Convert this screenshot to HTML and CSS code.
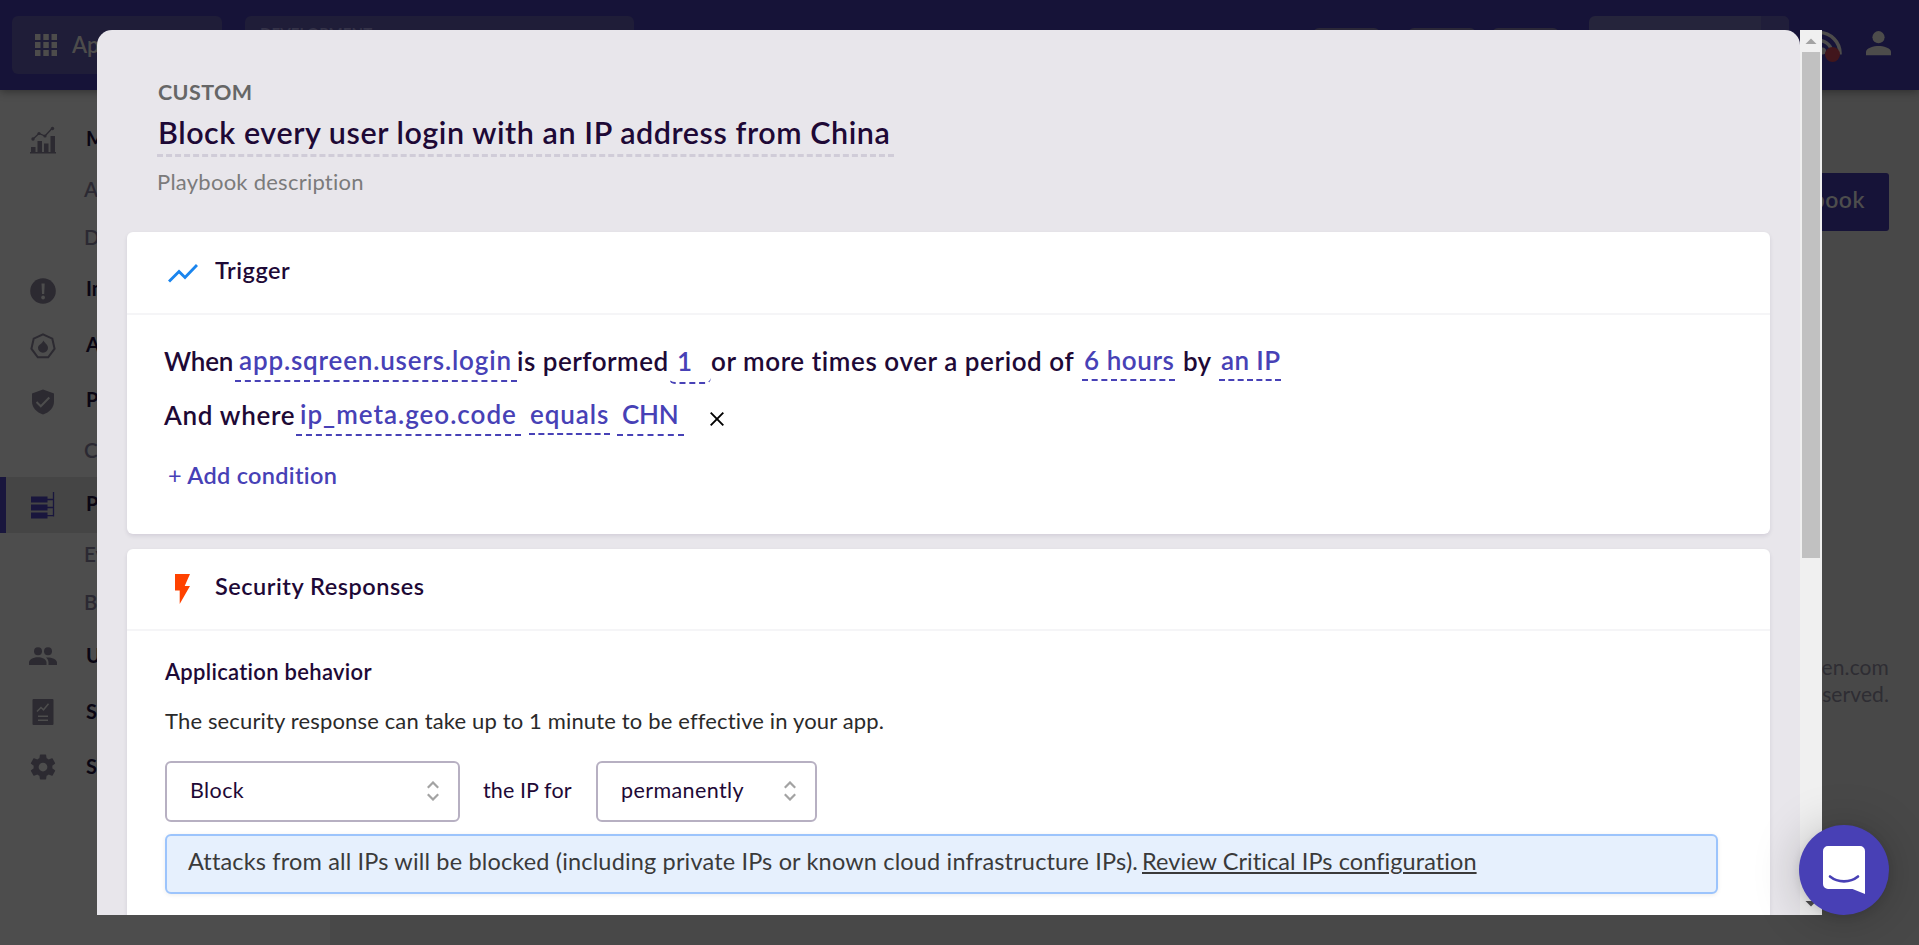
FILE: index.html
```html
<!DOCTYPE html>
<html lang="en">
<head>
<meta charset="utf-8">
<title>Playbook</title>
<link rel="stylesheet" href="styles.css">
</head>
<body>
<div class="app">
  <header class="topbar">
    <div class="apps-button">
      <svg width="24" height="24" viewBox="0 0 24 24" fill="#4d4c4b"><path d="M1 1h5.500v6H1zM9.300 1h5.500v6H9.300zM17.500 1H23v6h-5.500zM1 9h5.500v6H1zM9.300 9h5.500v6H9.300zM17.500 9H23v6h-5.500zM1 17h5.500v6H1zM9.300 17h5.500v6H9.300zM17.500 17H23v6h-5.500z"/></svg>
      <span>Ap</span>
    </div>
    <div class="environment">DEVELOPMENT</div>
    <div class="pills"><i></i><i></i><i></i></div>
    <div class="search"><span></span></div>
    <div class="feed">
      <svg width="26" height="26" viewBox="0 0 26 26" fill="none" stroke="#4d4c4b"><path d="M3 2.500A21 21 0 0 1 24 24.500" stroke-width="3.500"/><path d="M3 10.500A13 13 0 0 1 16 24.500" stroke-width="3.500"/><circle cx="6.500" cy="21" r="3.500" fill="#4d4c4b" stroke="none"/></svg>
      <b></b>
    </div>
    <svg class="person" width="25" height="25" viewBox="0 0 25 25" fill="#4d4c4b"><circle cx="12.500" cy="6.200" r="6.100"/><path d="M0 24.300v-3.500C0 17 8 15 12.500 15S25 17 25 20.800v3.500z"/></svg>
  </header>
  <div class="columns">
    <nav class="sidebar">
      <div class="item h56"><svg width="26" height="28" viewBox="0 0 26 28" fill="#2c2a31"><path d="M1 21h4.500v5H1zM7.500 15h4.500v11H7.500zM14 17.500h4.500V26H14zM20.500 10H25v16h-4.500zM0 26h26v1.500H0z"/><path d="M3 13l6-5.500 6 2.500L22 2.500" fill="none" stroke="#2c2a31" stroke-width="1.300"/><circle cx="3" cy="13" r="1.700"/><circle cx="9" cy="7.500" r="1.600"/><circle cx="15" cy="10" r="1.600"/><circle cx="22.500" cy="2.500" r="1.700"/></svg><span>M</span></div>
      <div class="item sub h46"><span>A</span></div>
      <div class="item sub h50"><span>D</span></div>
      <div class="item h53"><svg width="26" height="26" viewBox="0 0 26 26"><circle cx="13" cy="13" r="12.800" fill="#2c2a31"/><path d="M11.500 5.500h3.200l-.5 10.500h-2.200z" fill="#4d4d4d"/><circle cx="13.100" cy="19.500" r="1.900" fill="#4d4d4d"/></svg><span>In</span></div>
      <div class="item h58"><svg width="26" height="26" viewBox="0 0 26 26"><path d="M13 1.300l9.300 4.400 2.300 10-6.400 8.600H7.800L1.400 15.700l2.300-10z" fill="none" stroke="#2c2a31" stroke-width="2"/><path d="M13.500 7.500c.5 2 4.500 4 4.500 7.200a5 5 0 0 1-10 0c0-3 4.500-4 5.500-7.200z" fill="#2c2a31"/></svg><span>A</span></div>
      <div class="item h53"><svg width="24" height="26" viewBox="0 0 24 26"><path d="M12 .5l11 4v8c0 6-4.500 11-11 13-6.500-2-11-7-11-13v-8z" fill="#2c2a31"/><path d="M5.500 13l4.300 4.300 8.500-8.800" fill="none" stroke="#4d4d4d" stroke-width="2"/></svg><span>P</span></div>
      <div class="item sub h49"><span>C</span></div>
      <div class="item active h56"><svg width="26" height="28" viewBox="0 0 26 28" fill="#19163d"><path d="M1 5.500h16.500v6H1zM1 13.500h16.500v6H1zM1 21.500h16.500v6H1z"/><path d="M23.500 1v24.500M17 8.500h6.500M17 16.500h6.500M17 24.700h6.500" stroke="#19163d" stroke-width="1.300" fill="none"/></svg><span>P</span></div>
      <div class="item sub h47"><span>Ev</span></div>
      <div class="item sub h48"><span>B</span></div>
      <div class="item low h56"><svg width="28" height="20" viewBox="0 0 28 20" fill="#2c2a31"><circle cx="9" cy="5.200" r="4"/><circle cx="19" cy="5.200" r="4"/><path d="M0 19v-2.500C0 13 5.500 11.300 9 11.300s8.500 1.700 8.500 5.200V19zM19.500 19v-2.500c0-2-1-3.700-2.500-5 4-.6 11 1.200 11 5V19z"/></svg><span>U</span></div>
      <div class="item low h56"><svg width="21" height="26" viewBox="0 0 21 26"><rect width="21" height="26" rx="1" fill="#2c2a31"/><path d="M4.500 12.500l4-4 2.500 2.300 5-6M5.500 17.300h10M5.500 21.300h10" stroke="#4d4d4d" stroke-width="1.500" fill="none"/></svg><span>S</span></div>
      <div class="item low h54"><svg width="30" height="30" viewBox="0 0 24 24" fill="#2c2a31"><path d="M19.430 12.980c.04-.32.07-.64.07-.98s-.03-.66-.07-.98l2.110-1.650c.19-.15.24-.42.12-.64l-2-3.460c-.12-.22-.39-.3-.61-.22l-2.490 1c-.52-.4-1.080-.73-1.690-.98l-.38-2.650C14.460 2.180 14.250 2 14 2h-4c-.25 0-.46.18-.49.42l-.38 2.650c-.61.25-1.170.59-1.690.98l-2.490-1c-.23-.09-.49 0-.61.22l-2 3.460c-.13.22-.07.49.12.64l2.110 1.650c-.04.32-.07.65-.07.98s.03.66.07.98l-2.110 1.650c-.19.15-.24.42-.12.64l2 3.460c.12.22.39.3.61.22l2.490-1c.52.4 1.080.73 1.690.98l.38 2.650c.03.24.24.42.49.42h4c.25 0 .46-.18.49-.42l.38-2.650c.61-.25 1.170-.59 1.690-.98l2.490 1c.23.09.49 0 .61-.22l2-3.460c.12-.22.07-.49-.12-.64zM12 15.500a3.500 3.500 0 1 1 0-7 3.500 3.500 0 0 1 0 7z"/></svg><span>S</span></div>
    </nav>
    <main class="content">
      <div class="new-button">book</div>
      <footer>en.com<br>served.</footer>
    </main>
  </div>

  <div class="modal">
    <div class="modal-page">
      <div class="modal-head">
        <div class="kind">CUSTOM</div>
        <div class="name">Block every user login with an IP address from China</div>
        <div class="description">Playbook description</div>
      </div>
      <section class="card">
        <div class="card-head">
          <svg class="trend" width="30" height="19" viewBox="0 0 30 19" fill="none" stroke="#1a85ee" stroke-width="2.900"><path d="M1 17.500L11 7.500l6 6L29 1"/></svg>
          <h2>Trigger</h2>
        </div>
        <div class="rules">
          <div class="line">
            <span class="w-when">When</span><span class="token t-event">app.sqreen.users.login</span><span class="w-perf">is performed</span><span class="count">1</span><span class="w-over">or more times over a period of</span><span class="token up t-hours">6 hours</span><span class="w-by">by</span><span class="token up t-ip">an IP</span>
          </div>
          <div class="line">
            <span class="w-where">And where</span><span class="token t-code">ip_meta.geo.code</span><span class="token up t-equals">equals</span><span class="token t-chn">CHN</span><svg class="remove" width="14" height="14" viewBox="0 0 14 14" stroke="#000" stroke-width="1.900"><path d="M.7.700l12.600 12.600M13.300.700L.7 13.300"/></svg>
          </div>
          <div class="add"><span>+</span> Add condition</div>
        </div>
      </section>
      <section class="card responses">
        <div class="card-head">
          <svg class="bolt" width="15" height="30" viewBox="0 0 15 30" fill="#ff4200"><path d="M0 0h15L9.700 12H15L4.700 30V16.500H0z"/></svg>
          <h2 class="wide">Security Responses</h2>
        </div>
        <div class="card-body">
          <h3>Application behavior</h3>
          <p>The security response can take up to 1 minute to be effective in your app.</p>
          <div class="controls">
            <div class="select s-action"><span>Block</span><svg width="12" height="20" viewBox="0 0 12 20" fill="none" stroke="#a3a3a3" stroke-width="2.200"><path d="M.8 6.800L6 1.500l5.200 5.300M.8 13.200L6 18.500l5.200-5.300"/></svg></div>
            <span class="between">the IP for</span>
            <div class="select s-time"><span>permanently</span><svg width="12" height="20" viewBox="0 0 12 20" fill="none" stroke="#a3a3a3" stroke-width="2.200"><path d="M.8 6.800L6 1.500l5.200 5.300M.8 13.200L6 18.500l5.200-5.300"/></svg></div>
          </div>
          <div class="notice"><span>Attacks from all IPs will be blocked (including private IPs or known cloud infrastructure IPs).</span><a>Review Critical IPs configuration</a></div>
        </div>
      </section>
    </div>
    <div class="scrollbar">
      <svg width="22" height="22" viewBox="0 0 22 22"><path d="M5.500 14L11 8.500l5.500 5.500z" fill="#a3a3a3"/></svg>
      <div class="thumb"></div>
      <svg class="down" width="22" height="22" viewBox="0 0 22 22"><path d="M5.500 8L11 13.500 16.500 8z" fill="#505050"/></svg>
    </div>
  </div>

  <div class="chat">
    <svg width="42" height="48" viewBox="0 0 42 48"><path d="M5 0h32a5 5 0 0 1 5 5v43l-12.500-5H5a5 5 0 0 1-5-5V5a5 5 0 0 1 5-5z" fill="#fff"/><path d="M7 30.500c8 6.500 20 6.500 28 0" fill="none" stroke="#4840b5" stroke-width="2.600" stroke-linecap="round"/></svg>
  </div>
</div>
</body>
</html>
```
FILE: styles.css
```css
* { box-sizing: border-box; }
body { margin: 0; font-family: Lato, "Open Sans", sans-serif; font-variant-ligatures: none; }
svg { display: block; flex: none; }
.app { position: relative; width: 1919px; height: 945px; overflow: hidden; background: #484848; display: flex; flex-direction: column; }

.topbar { height: 90px; flex: none; background: #161338; display: flex; align-items: flex-start; padding-top: 16px; padding-left: 12px; box-shadow: 0 2px 8px rgba(0,0,0,.35); position: relative; }
.apps-button { width: 210px; height: 58px; border-radius: 6px; background: #1f1d38; display: flex; padding: 17px 0 0 22px; gap: 14px; font-size: 22px; line-height: 24px; font-weight: 600; color: #4d4c4b; }
.environment { width: 389px; height: 58px; margin-left: 23px; border-radius: 6px; background: #1f1d38; color: #353348; font-size: 15px; line-height: 18px; padding: 8px 0 0 15px; font-weight: 700; letter-spacing: .1px; }
.pills { display: flex; margin: 12px 0 0 679px; width: 262px; }
.pills i { height: 24px; width: 72px; border-radius: 6px; background: #2b2838; margin-right: 28px; }
.pills i + i { margin-right: 16px; }
.search { width: 200px; height: 58px; margin-left: 14px; border-radius: 6px; background: #25243b; overflow: hidden; display: flex; justify-content: flex-end; }
.search span { width: 28px; background: #201e3a; }
.feed { position: relative; margin: 14px 0 0 27px; width: 26px; }
.feed b { position: absolute; left: 9px; top: 17px; width: 15px; height: 15px; border-radius: 50%; background: #41161c; }
.person { margin: 15px 0 0 24px; }

.columns { flex: 1; display: flex; }
.sidebar { width: 330px; background: #4d4d4d; padding-top: 22px; }
.item { display: flex; align-items: center; }
.item svg { width: 86px; }
.item span { font-size: 20px; line-height: 24px; font-weight: 700; color: #0a0613; margin-bottom: 5px; }
.item.low span { margin-bottom: 2px; }
.item.sub { padding-left: 84px; }
.item.sub span { font-size: 20.5px; font-weight: 600; color: #2b2932; }
.active { background: #454545; border-left: 6px solid #19163d; }
.active svg { width: 74px; margin-right: 6px; }
.h46 { height: 46px; } .h47 { height: 47px; } .h48 { height: 48px; } .h49 { height: 49px; } .h50 { height: 50px; }
.h53 { height: 53px; } .h54 { height: 54px; } .h56 { height: 56px; } .h58 { height: 58px; }
.content { flex: 1; display: flex; flex-direction: column; align-items: flex-end; padding: 83px 30px 0 0; }
.new-button { width: 200px; height: 58px; border-radius: 3px; background: #161338; color: #4d4d4d; font-size: 23px; line-height: 53px; font-weight: 600; text-align: right; padding-right: 24px; letter-spacing: .5px; }
.content footer { margin-top: 422px; font-size: 21px; line-height: 27px; color: #2e2d33; text-align: right; letter-spacing: .1px; }

.modal { position: absolute; left: 97px; top: 30px; width: 1725px; height: 885px; display: flex; overflow: hidden; }
.modal-page { width: 1703px; background: #e8e6eb; border-radius: 15px 15px 0 0; padding: 50px 30px 0; }
.modal-head { padding-left: 30px; display: flex; flex-direction: column; align-items: flex-start; }
.kind { padding-left: 1px; font-size: 21.5px; line-height: 25px; font-weight: 700; color: #666; letter-spacing: .4px; }
.name { margin-top: 9px; width: 737px; padding: 0 0 4px 1px; font-size: 30.5px; line-height: 36px; font-weight: 600; color: #1e0936; letter-spacing: .56px; white-space: nowrap; border-bottom: 3px dashed #d0ccd8; }
.description { margin-top: 12px; font-size: 22px; line-height: 26px; color: #7b7b7b; letter-spacing: .25px; }

.card { margin-top: 37px; height: 302px; background: #fff; border-radius: 6px; box-shadow: 0 2px 4px rgba(30,9,54,.1); }
.card-head { height: 83px; border-bottom: 2px solid #f5f5f7; padding: 24px 0 0 41px; display: flex; align-items: flex-start; }
h2 { margin: 0 0 0 17px; font-size: 23.5px; line-height: 29px; font-weight: 600; color: #1e0936; letter-spacing: .52px; }
.trend { margin-top: 8px; }
.rules { padding: 26px 0 0 37px; color: #1e0936; }
.line { display: flex; align-items: flex-start; height: 54px; font-size: 26px; line-height: 40px; font-weight: 600; white-space: nowrap; letter-spacing: .57px; }
.token { height: 41px; line-height: 39px; color: #4741b6; border-bottom: 2px dashed #4741b6; }
.up { margin-top: -1px; line-height: 40px; }
.w-when { width: 71px; letter-spacing: -.2px; }
.t-event { width: 282px; padding-left: 4px; letter-spacing: .83px; }
.w-perf { width: 152px; letter-spacing: .5px; }
.count { width: 42px; height: 43px; padding-left: 8px; line-height: 41px; color: #4741b6; border-bottom: 2px dashed #4741b6; border-radius: 6px; }
.w-over { width: 371px; }
.t-hours { width: 93px; padding-left: 2px; }
.w-by { width: 44px; padding-left: 8px; letter-spacing: .1px; }
.t-ip { width: 62px; padding-left: 2px; letter-spacing: .4px; }
.w-where { width: 132px; letter-spacing: .7px; }
.t-code { width: 225px; padding-left: 4px; letter-spacing: 1px; }
.t-equals { width: 81px; margin-left: 8px; padding-left: 1px; letter-spacing: .9px; }
.t-chn { width: 67px; margin-left: 7px; padding-left: 5px; letter-spacing: -.2px; }
.remove { margin: 17px 0 0 26px; }
.add { margin-top: 12px; padding-left: 4px; font-size: 23.5px; line-height: 29px; font-weight: 600; color: #4741b6; letter-spacing: .3px; white-space: nowrap; }
.add span { font-weight: 400; }

.responses { margin-top: 15px; height: 420px; }
.responses .card-head { height: 82px; padding: 23px 0 0 48px; }
.bolt { margin-top: 2px; }
h2.wide { margin-left: 25px; }
.card-body { padding: 27px 52px 0 38px; }
h3 { margin: 0; font-size: 22px; line-height: 27px; font-weight: 600; color: #1e0936; letter-spacing: .3px; }
p { margin: 23px 0 0; font-size: 22px; line-height: 26px; color: #2a2a2a; letter-spacing: .15px; white-space: nowrap; }
.controls { display: flex; margin-top: 27px; font-size: 21.5px; line-height: 54px; color: #1e0936; }
.select { height: 61px; border: 2px solid #b7b0c2; border-radius: 6px; display: flex; justify-content: space-between; padding: 0 19px 0 23px; letter-spacing: .4px; }
.select svg { margin-top: 18px; }
.s-action { width: 295px; }
.s-time { width: 221px; }
.between { width: 136px; padding: 2px 0 0 23px; letter-spacing: .1px; }
.notice { display: flex; margin-top: 12px; height: 60px; border: 2px solid #9cc4fc; border-radius: 6px; background: #e6f0fd; box-shadow: 0 1px 4px rgba(0,0,0,.08); padding-left: 21px; font-size: 23.5px; line-height: 51px; color: #3a3a3a; white-space: nowrap; }
.notice span { width: 954px; letter-spacing: .16px; }
.notice a { letter-spacing: .08px; text-decoration: underline; text-decoration-thickness: 2px; text-underline-offset: 2px; }

.scrollbar { width: 22px; background: #f0f0f0; display: flex; flex-direction: column; }
.thumb { height: 506px; margin: 0 2px; background: #c1c1c1; }
.down { margin-top: auto; }
.chat { position: absolute; left: 1799px; top: 825px; width: 90px; height: 90px; border-radius: 50%; background: #4840b5; box-shadow: 0 2px 9px rgba(0,0,0,.1), 0 3px 48px rgba(0,0,0,.22); display: flex; justify-content: center; padding-top: 21px; }
```
